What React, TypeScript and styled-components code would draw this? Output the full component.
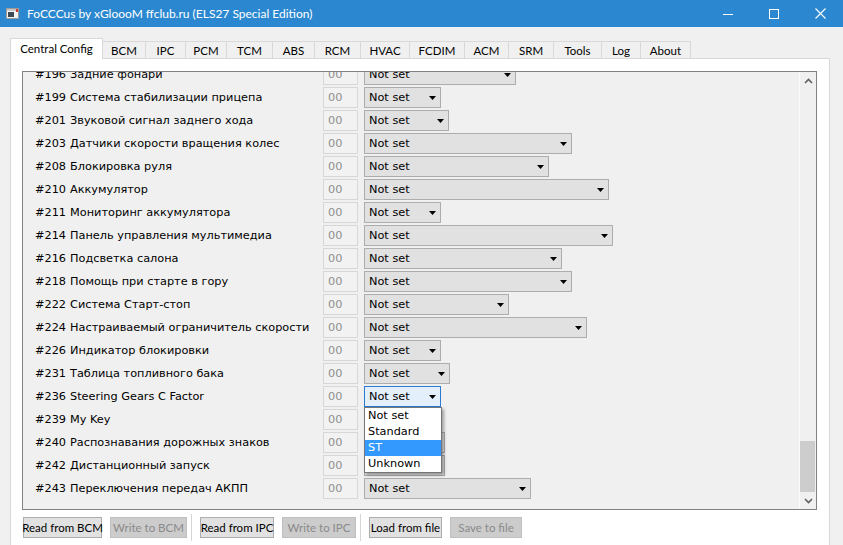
import React from 'react';
import styled, { createGlobalStyle } from 'styled-components';

const uiFont = `Lato, "Liberation Sans", sans-serif`;
const dlgFont = `"DejaVu Sans", Verdana, sans-serif`;

const GlobalStyle = createGlobalStyle`
  html, body {
    margin: 0;
    padding: 0;
    background: #f0f0f0;
    overflow: hidden;
  }
`;

const tabs = [
  { label: 'Central Config', w: 93 },
  { label: 'BCM', w: 44 },
  { label: 'IPC', w: 41 },
  { label: 'PCM', w: 42 },
  { label: 'TCM', w: 47 },
  { label: 'ABS', w: 43 },
  { label: 'RCM', w: 47 },
  { label: 'HVAC', w: 50 },
  { label: 'FCDIM', w: 56 },
  { label: 'ACM', w: 45 },
  { label: 'SRM', w: 46 },
  { label: 'Tools', w: 49 },
  { label: 'Log', w: 40 },
  { label: 'About', w: 51 },
];

const rows = [
  { code: '#196', name: 'Задние фонари', w: 152 },
  { code: '#199', name: 'Система стабилизации прицепа', w: 77 },
  { code: '#201', name: 'Звуковой сигнал заднего хода', w: 85 },
  { code: '#203', name: 'Датчики скорости вращения колес', w: 208 },
  { code: '#208', name: 'Блокировка руля', w: 185 },
  { code: '#210', name: 'Аккумулятор', w: 245 },
  { code: '#211', name: 'Мониторинг аккумулятора', w: 77 },
  { code: '#214', name: 'Панель управления мультимедиа', w: 249 },
  { code: '#216', name: 'Подсветка салона', w: 198 },
  { code: '#218', name: 'Помощь при старте в гору', w: 208 },
  { code: '#222', name: 'Система Старт-стоп', w: 145 },
  { code: '#224', name: 'Настраиваемый ограничитель скорости', w: 223 },
  { code: '#226', name: 'Индикатор блокировки', w: 77 },
  { code: '#231', name: 'Таблица топливного бака', w: 86 },
  { code: '#236', name: 'Steering Gears C Factor', w: 77, open: true },
  { code: '#239', name: 'My Key', w: 77 },
  { code: '#240', name: 'Распознавания дорожных знаков', w: 81 },
  { code: '#242', name: 'Дистанционный запуск', w: 81 },
  { code: '#243', name: 'Переключения передач АКПП', w: 167 },
];

const options = ['Not set', 'Standard', 'ST', 'Unknown'];

const buttons = [
  [
    { label: 'Read from BCM', w: 79 },
    { label: 'Write to BCM', w: 77, disabled: true },
  ],
  [
    { label: 'Read from IPC', w: 74 },
    { label: 'Write to IPC', w: 74, disabled: true },
  ],
  [
    { label: 'Load from file', w: 73 },
    { label: 'Save to file', w: 72, disabled: true },
  ],
];

const Window = styled.div`
  width: 843px;
  height: 545px;
  display: flex;
  flex-direction: column;
  background: #f0f0f0;
  overflow: hidden;
`;

const TitleBar = styled.div`
  height: 27px;
  flex: none;
  display: flex;
  align-items: center;
  background: #2b88d0;
  color: #fff;
  font-family: ${uiFont};
  font-size: 12px;
`;

const AppIcon = styled.svg`
  margin-left: 6px;
  flex: none;
`;

const Title = styled.div`
  flex: 1;
  margin-left: 8px;
  margin-top: -1px;
  white-space: nowrap;
`;

const WinButton = styled.div`
  width: 46px;
  height: 27px;
  display: flex;
  align-items: center;
  justify-content: center;
`;

const Body = styled.div`
  flex: 1;
  min-height: 0;
  display: flex;
  flex-direction: column;
  padding: 11px 13px 0 10px;
`;

const TabBar = styled.div`
  height: 21px;
  flex: none;
  display: flex;
  align-items: flex-end;
  margin-bottom: -1px;
  position: relative;
  z-index: 1;
`;

const Tab = styled.div<{ $w: number; $active?: boolean }>`
  box-sizing: border-box;
  width: ${(p) => p.$w}px;
  height: ${(p) => (p.$active ? 21 : 17)}px;
  margin-bottom: ${(p) => (p.$active ? 0 : 1)}px;
  margin-left: -1px;
  display: flex;
  align-items: center;
  justify-content: center;
  padding-bottom: ${(p) => (p.$active ? 2 : 0)}px;
  border: 1px solid #d9d9d9;
  border-bottom: none;
  background: ${(p) => (p.$active ? '#ffffff' : '#f0f0f0')};
  font-family: ${uiFont};
  font-size: 11.5px;
  color: #000;
  white-space: nowrap;
  &:first-child {
    margin-left: 0;
  }
`;

const Pane = styled.div`
  flex: 1;
  min-height: 0;
  display: flex;
  flex-direction: column;
  background: #ffffff;
  border: 1px solid #d9d9d9;
  border-bottom: none;
  padding: 12px 12px 0 11px;
`;

const ScrollArea = styled.div`
  box-sizing: border-box;
  height: 439px;
  flex: none;
  display: flex;
  border: 1px solid #828282;
  background: #f0f0f0;
`;

const Viewport = styled.div`
  flex: 1;
  overflow: hidden;
  border-right: 1px solid #fbfbfb;
`;

const List = styled.div`
  margin-top: -9px;
`;

const Row = styled.div`
  height: 23px;
  display: grid;
  grid-template-columns: 35px 253px 35px auto;
  align-items: center;
  padding-left: 12px;
  font-family: ${dlgFont};
  font-size: 11.3px;
  color: #000;
`;

const Code = styled.span`
  white-space: nowrap;
`;

const Name = styled.span`
  white-space: nowrap;
`;

const ValueBox = styled.div`
  box-sizing: border-box;
  height: 21px;
  display: flex;
  align-items: center;
  padding-left: 4px;
  border: 1px solid #d7d7d7;
  background: #f2f2f2;
  color: #8f8f8f;
`;

const SelectWrap = styled.div`
  position: relative;
  margin-left: 6px;
`;

const Select = styled.div<{ $w: number; $focus?: boolean }>`
  box-sizing: border-box;
  width: ${(p) => p.$w}px;
  height: 21px;
  display: flex;
  align-items: center;
  justify-content: space-between;
  padding: 0 4px;
  border: 1px solid ${(p) => (p.$focus ? '#2a7ad2' : '#adadad')};
  background: ${(p) => (p.$focus ? '#e3effa' : '#e1e1e1')};
`;

const Arrow = styled.svg`
  flex: none;
`;

const Popup = styled.div`
  position: absolute;
  top: 100%;
  left: 0;
  z-index: 5;
  box-sizing: border-box;
  width: 78px;
  border: 1px solid #767676;
  background: #ffffff;
  box-shadow: 2px 2px 3px rgba(0, 0, 0, 0.35);
`;

const Option = styled.div<{ $active?: boolean }>`
  height: 16px;
  line-height: 16px;
  padding-left: 3px;
  background: ${(p) => (p.$active ? '#3399ff' : 'transparent')};
  color: ${(p) => (p.$active ? '#ffffff' : '#000')};
`;

const ScrollBar = styled.div`
  width: 16px;
  flex: none;
  display: flex;
  flex-direction: column;
  background: #f0f0f0;
`;

const ScrollBtn = styled.div`
  height: 17px;
  flex: none;
  display: flex;
  align-items: center;
  justify-content: center;
`;

const Track = styled.div`
  flex: 1;
  display: flex;
  flex-direction: column;
  justify-content: flex-end;
`;

const Thumb = styled.div`
  height: 51px;
  margin-right: 1px;
  background: #cdcdcd;
`;

const ButtonBar = styled.div`
  display: flex;
  align-items: center;
  margin: 7px 0 0 1px;
  height: 21px;
`;

const Group = styled.div`
  display: flex;
  gap: 8px;
`;

const Separator = styled.div`
  width: 1px;
  height: 27px;
  background: #d6d6d6;
  margin: 0 8px 0 4px;
`;

const Button = styled.div<{ $w: number; $disabled?: boolean }>`
  box-sizing: border-box;
  width: ${(p) => p.$w}px;
  height: 21px;
  display: flex;
  align-items: center;
  justify-content: center;
  border: 1px solid ${(p) => (p.$disabled ? '#bfbfbf' : '#adadad')};
  background: ${(p) => (p.$disabled ? '#cccccc' : '#e1e1e1')};
  color: ${(p) => (p.$disabled ? '#8a8a8a' : '#000')};
  font-family: ${uiFont};
  font-size: 11.5px;
  white-space: nowrap;
`;

const Chevron = ({ down }: { down?: boolean }) => (
  <svg width="9" height="6" viewBox="0 0 9 6">
    <path
      d={down ? 'M1 1 L4.5 4.5 L8 1' : 'M1 5 L4.5 1.5 L8 5'}
      fill="none"
      stroke="#606060"
      strokeWidth="1.6"
    />
  </svg>
);

const DropArrow = () => (
  <Arrow width="7" height="4" viewBox="0 0 7 4">
    <path d="M0 0 H7 L3.5 4 Z" fill="#000" />
  </Arrow>
);

export default function App() {
  return (
    <Window>
      <GlobalStyle />
      <TitleBar>
        <AppIcon width="13" height="11" viewBox="0 0 13 11">
          <rect x="0.5" y="0.5" width="12" height="10" fill="#f4f4f4" stroke="#9a9a9a" />
          <rect x="1" y="1" width="11" height="2" fill="#c8c8c8" />
          <rect x="2" y="4" width="6" height="5" fill="#3c4a55" />
          <rect x="10" y="1" width="2" height="3" fill="#d23b2b" />
        </AppIcon>
        <Title>FoCCCus by xGloooM ffclub.ru (ELS27 Special Edition)</Title>
        <WinButton>
          <svg width="10" height="10" viewBox="0 0 10 10">
            <path d="M0 5.5 H10" stroke="#fff" strokeWidth="1" />
          </svg>
        </WinButton>
        <WinButton>
          <svg width="10" height="10" viewBox="0 0 10 10">
            <rect x="0.5" y="0.5" width="9" height="9" fill="none" stroke="#fff" strokeWidth="1" />
          </svg>
        </WinButton>
        <WinButton>
          <svg width="11" height="11" viewBox="0 0 11 11">
            <path d="M0.5 0.5 L10.5 10.5 M10.5 0.5 L0.5 10.5" stroke="#fff" strokeWidth="1.1" />
          </svg>
        </WinButton>
      </TitleBar>

      <Body>
        <TabBar>
          {tabs.map((t, i) => (
            <Tab key={t.label} $w={t.w} $active={i === 0}>
              {t.label}
            </Tab>
          ))}
        </TabBar>

        <Pane>
          <ScrollArea>
            <Viewport>
              <List>
                {rows.map((r) => (
                  <Row key={r.code}>
                    <Code>{r.code}</Code>
                    <Name>{r.name}</Name>
                    <ValueBox>00</ValueBox>
                    <SelectWrap>
                      <Select $w={r.w} $focus={r.open}>
                        <span>Not set</span>
                        <DropArrow />
                      </Select>
                      {r.open && (
                        <Popup>
                          {options.map((o) => (
                            <Option key={o} $active={o === 'ST'}>
                              {o}
                            </Option>
                          ))}
                        </Popup>
                      )}
                    </SelectWrap>
                  </Row>
                ))}
              </List>
            </Viewport>
            <ScrollBar>
              <ScrollBtn>
                <Chevron />
              </ScrollBtn>
              <Track>
                <Thumb />
              </Track>
              <ScrollBtn>
                <Chevron down />
              </ScrollBtn>
            </ScrollBar>
          </ScrollArea>

          <ButtonBar>
            {buttons.map((g, gi) => (
              <React.Fragment key={gi}>
                {gi > 0 && <Separator />}
                <Group>
                  {g.map((b) => (
                    <Button key={b.label} $w={b.w} $disabled={b.disabled}>
                      {b.label}
                    </Button>
                  ))}
                </Group>
              </React.Fragment>
            ))}
          </ButtonBar>
        </Pane>
      </Body>
    </Window>
  );
}
